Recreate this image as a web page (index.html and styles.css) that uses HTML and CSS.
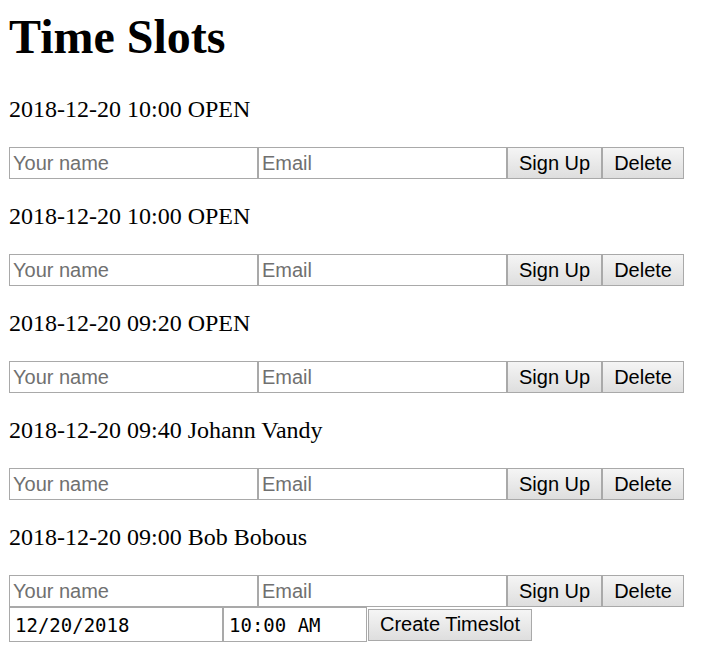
FILE: index.html
```html
<!DOCTYPE html>
<html>
<head>
<meta charset="utf-8">
<title>Time Slots</title>
<link rel="stylesheet" href="styles.css">
</head>
<body>
<h1 class="title">Time Slots</h1>

<p class="slot">2018-12-20 10:00 OPEN</p>
<div class="row"><input class="field" type="text" placeholder="Your name"><input class="field" type="text" placeholder="Email"><button class="btn">Sign Up</button><button class="btn">Delete</button></div>

<p class="slot">2018-12-20 10:00 OPEN</p>
<div class="row"><input class="field" type="text" placeholder="Your name"><input class="field" type="text" placeholder="Email"><button class="btn">Sign Up</button><button class="btn">Delete</button></div>

<p class="slot">2018-12-20 09:20 OPEN</p>
<div class="row"><input class="field" type="text" placeholder="Your name"><input class="field" type="text" placeholder="Email"><button class="btn">Sign Up</button><button class="btn">Delete</button></div>

<p class="slot">2018-12-20 09:40 Johann Vandy</p>
<div class="row"><input class="field" type="text" placeholder="Your name"><input class="field" type="text" placeholder="Email"><button class="btn">Sign Up</button><button class="btn">Delete</button></div>

<p class="slot">2018-12-20 09:00 Bob Bobous</p>
<div class="row"><input class="field" type="text" placeholder="Your name"><input class="field" type="text" placeholder="Email"><button class="btn">Sign Up</button><button class="btn">Delete</button></div>

<div class="create"><input class="mono date" type="text" value="12/20/2018"><input class="mono time" type="text" value="10:00 AM"><button class="btn create-btn">Create Timeslot</button></div>
</body>
</html>
```

FILE: styles.css
```css
html, body {
  background: #fff;
}
body {
  margin: 0;
  padding: 10px 9px;
  font-family: "Liberation Serif", "Times New Roman", serif;
  color: #000;
}
.title {
  margin: 0 0 32px;
  font-size: 48px;
  line-height: 54px;
  font-weight: bold;
}
.slot {
  margin: 24px 0;
  font-size: 24px;
  line-height: 27px;
}
.row {
  display: flex;
  align-items: stretch;
  height: 32px;
}
.field {
  box-sizing: border-box;
  width: 249px;
  height: 32px;
  margin: 0;
  padding: 0 3px;
  border: 1px solid #a9a9a9;
  font-family: "Liberation Sans", Arial, sans-serif;
  font-size: 20px;
  color: #000;
  background: #fff;
  outline: none;
}
.field::placeholder {
  color: #707070;
}
.btn {
  box-sizing: border-box;
  height: 32px;
  margin: 0;
  padding: 0 11px;
  border: 1px solid #a9a9a9;
  border-radius: 0;
  background: linear-gradient(#f5f5f5, #dedede);
  font-family: "Liberation Sans", Arial, sans-serif;
  font-size: 20px;
  color: #000;
}
.create {
  display: flex;
  align-items: center;
}
.mono {
  box-sizing: border-box;
  height: 35px;
  margin: 0;
  padding: 0 5px;
  border: 1px solid #a9a9a9;
  font-family: "DejaVu Sans Mono", "Liberation Mono", monospace;
  font-size: 19px;
  color: #000;
  background: #fff;
  outline: none;
}
.date {
  width: 214px;
}
.time {
  width: 144px;
}
.create-btn {
  margin-left: 1px;
  width: 164px;
  padding: 0;
}
```
